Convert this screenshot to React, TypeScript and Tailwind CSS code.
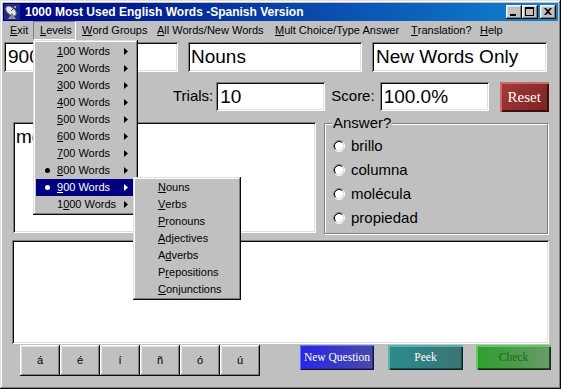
import React from 'react';

const raised =
  'shadow-[inset_-1px_-1px_#0a0a0a,inset_1px_1px_#ffffff,inset_-2px_-2px_#808080,inset_2px_2px_#dfdfdf]';
const menuFrame =
  'shadow-[inset_-1px_-1px_#0a0a0a,inset_1px_1px_#dfdfdf,inset_-2px_-2px_#808080,inset_2px_2px_#ffffff]';
const sunken =
  'shadow-[inset_1px_1px_#808080,inset_-1px_-1px_#ffffff,inset_2px_2px_#0a0a0a,inset_-2px_-2px_#dfdfdf]';

// letter with mnemonic underline
function U({ children }: { children: React.ReactNode }) {
  return <span className="underline underline-offset-[1px]">{children}</span>;
}

function Arrow({ white }: { white?: boolean }) {
  return (
    <svg width="4" height="7" viewBox="0 0 4 7" className="block">
      <polygon points="0,0 4,3.5 0,7" fill={white ? '#ffffff' : '#000000'} />
    </svg>
  );
}

function Radio() {
  return (
    <svg width="12" height="12" viewBox="0 0 12 12" className="block shrink-0">
      <circle cx="6" cy="6" r="4.5" fill="#ffffff" />
      <path d="M 2.11 9.89 A 5.5 5.5 0 0 1 9.89 2.11" stroke="#808080" fill="none" />
      <path d="M 9.89 2.11 A 5.5 5.5 0 0 1 2.11 9.89" stroke="#ffffff" fill="none" />
      <path d="M 2.82 9.18 A 4.5 4.5 0 0 1 9.18 2.82" stroke="#0a0a0a" fill="none" />
      <path d="M 9.18 2.82 A 4.5 4.5 0 0 1 2.82 9.18" stroke="#dfdfdf" fill="none" />
    </svg>
  );
}

function DishIcon() {
  return (
    <svg width="16" height="16" viewBox="0 0 16 16" className="block">
      <rect x="0" y="0" width="16" height="16" fill="#1a2a8a" />
      <ellipse cx="7" cy="7" rx="6" ry="3.5" transform="rotate(40 7 7)" fill="#e8e8e8" stroke="#808080" />
      <line x1="7" y1="7" x2="11" y2="3" stroke="#404040" strokeWidth="1" />
      <circle cx="11" cy="3" r="1" fill="#c0c0c0" />
      <path d="M 8 10 L 12 15 L 4 15 Z" fill="#a0a0a0" />
      <line x1="8" y1="9" x2="8" y2="15" stroke="#606060" />
    </svg>
  );
}

function WinButton({ kind }: { kind: 'min' | 'max' | 'close' }) {
  return (
    <div className={`relative w-[16px] h-[14px] bg-[#c0c0c0] ${raised} flex items-center justify-center`}>
      {kind === 'min' && <div className="absolute left-[4px] top-[9px] w-[6px] h-[2px] bg-black" />}
      {kind === 'max' && (
        <div className="absolute left-[3px] top-[2px] w-[9px] h-[9px] border border-black border-t-2" />
      )}
      {kind === 'close' && (
        <svg width="8" height="7" viewBox="0 0 8 7" className="block -mt-[1px]">
          <path d="M0 0 L2 0 L4 2 L6 0 L8 0 L5 3.5 L8 7 L6 7 L4 5 L2 7 L0 7 L3 3.5 Z" fill="#000" />
        </svg>
      )}
    </div>
  );
}

const levels = ['100', '200', '300', '400', '500', '600', '700', '800', '900', '1000'];
const groups: [string, string, string][] = [
  ['', 'N', 'ouns'],
  ['', 'V', 'erbs'],
  ['', 'P', 'ronouns'],
  ['', 'A', 'djectives'],
  ['A', 'd', 'verbs'],
  ['P', 'r', 'epositions'],
  ['', 'C', 'onjunctions'],
];
const answers = ['brillo', 'columna', 'molécula', 'propiedad'];
const accents = ['á', 'é', 'í', 'ñ', 'ó', 'ú'];

export default function App() {
  return (
    <div
      className={`relative w-[561px] h-[389px] bg-[#c0c0c0] p-[3px] font-['Liberation_Sans',Arial,sans-serif] text-black overflow-hidden ${menuFrame}`}
    >
      {/* Title bar */}
      <div className="h-[18px] flex items-center px-[1px] bg-[linear-gradient(90deg,#000080,#1084d0)]">
        <DishIcon />
        <span className="ml-[5px] text-[12px] font-bold text-white leading-none">
          1000 Most Used English Words -Spanish Version
        </span>
        <div className="ml-auto flex items-center mr-[1px]">
          <WinButton kind="min" />
          <WinButton kind="max" />
          <div className="w-[2px]" />
          <WinButton kind="close" />
        </div>
      </div>

      {/* Menu bar */}
      <div className="h-[19px] flex items-stretch text-[11px] leading-none">
        <div className="w-[30px] pl-[7px] flex items-center"><U>E</U>xit</div>
        <div className="w-[43px] pl-[6px] flex items-center border border-t-[#808080] border-l-[#808080] border-b-white border-r-white">
          <U>L</U>evels
        </div>
        <div className="w-[75px] pl-[6px] flex items-center"><U>W</U>ord Groups</div>
        <div className="w-[118px] pl-[6px] flex items-center whitespace-nowrap"><U>A</U>ll Words/New Words</div>
        <div className="w-[135px] pl-[6px] flex items-center whitespace-nowrap"><U>M</U>ult Choice/Type Answer</div>
        <div className="w-[70px] pl-[7px] flex items-center"><U>T</U>ranslation?</div>
        <div className="w-[36px] pl-[6px] flex items-center"><U>H</U>elp</div>
      </div>

      {/* Row 1 */}
      <div className="mt-[2px] flex h-[30px] text-[19px] leading-[20px]">
        <div className={`ml-[1px] w-[174px] bg-white ${sunken} flex items-center pl-[4px] whitespace-nowrap overflow-hidden`}>900 Words</div>
        <div className={`ml-[10px] w-[174px] bg-white ${sunken} flex items-center pl-[3px]`}>Nouns</div>
        <div className={`ml-[10px] w-[175px] bg-white ${sunken} flex items-center pl-[4px]`}>New Words Only</div>
      </div>

      {/* Row 2 */}
      <div className="mt-[10px] flex items-start h-[30px]">
        <div className="ml-[170px] h-[29px] flex items-center text-[15px]">Trials:</div>
        <div className={`ml-[3px] w-[109px] h-[29px] bg-white ${sunken} flex items-center pl-[4px] text-[19px] leading-[20px]`}>10</div>
        <div className="ml-[6px] h-[29px] flex items-center text-[15px]">Score:</div>
        <div className={`ml-[5px] w-[109px] h-[29px] bg-white ${sunken} flex items-center pl-[4px] text-[19px] leading-[20px]`}>100.0%</div>
        <button
          className="ml-[11px] w-[49px] h-[30px] flex items-center justify-center bg-[linear-gradient(135deg,#a83a3a,#7a2222)] shadow-[inset_2px_2px_0_#c86a6a,inset_-2px_-2px_0_#3a1010] text-white font-['Liberation_Serif',serif] text-[15px]"
        >
          Reset
        </button>
      </div>

      {/* Row 3 */}
      <div className="mt-[10px] flex items-start">
        <div className={`ml-[10px] w-[303px] h-[111px] bg-white ${sunken} pl-[3px] pt-[5px] text-[19px] leading-[20px] whitespace-nowrap overflow-hidden`}>
          molecule
        </div>
        <div className="relative ml-[8px] mt-[1px] w-[224px] h-[111px] border border-[#808080] shadow-[inset_1px_1px_0_#ffffff,1px_1px_0_#ffffff]">
          <span className="absolute left-[7px] -top-[10px] px-[1px] bg-[#c0c0c0] text-[15px] leading-[17px]">Answer?</span>
          <div className="flex flex-col pt-[10px] pl-[8px] text-[15px]">
            {answers.map((a) => (
              <div key={a} className="h-[24px] flex items-center">
                <Radio />
                <span className="ml-[6px]">{a}</span>
              </div>
            ))}
          </div>
        </div>
      </div>

      {/* Row 4 */}
      <div className={`mt-[6px] ml-[9px] w-[537px] h-[104px] bg-white ${sunken}`} />

      {/* Row 5 */}
      <div className="mt-[1px] flex items-start">
        <div className="ml-[17px] flex">
          {accents.map((c) => (
            <button key={c} className={`w-[40px] h-[31px] bg-[#c0c0c0] ${raised} text-[11px] flex items-center justify-center`}>
              {c}
            </button>
          ))}
        </div>
        <button className="ml-[40px] w-[74px] h-[25px] flex items-center justify-center bg-[linear-gradient(90deg,#2626e6,#4a4aa8)] shadow-[inset_1px_1px_0_#6a6aff,inset_-1px_-1px_0_#101050,inset_-2px_-2px_0_#303080] text-white font-['Liberation_Serif',serif] text-[11.5px]">
          New Question
        </button>
        <button className="ml-[14px] w-[75px] h-[25px] flex items-center justify-center bg-[linear-gradient(90deg,#2a8c8c,#3a7474)] shadow-[inset_2px_2px_0_#5ab0b0,inset_-1px_-1px_0_#0a2a2a,inset_-2px_-2px_0_#1a4a4a] text-white font-['Liberation_Serif',serif] text-[11.5px]">
          Peek
        </button>
        <button className="ml-[13px] w-[75px] h-[25px] flex items-center justify-center bg-[linear-gradient(90deg,#2e9e2e,#6a9a6a)] shadow-[inset_2px_2px_0_#60c860,inset_-1px_-1px_0_#102a10,inset_-2px_-2px_0_#2a4a2a] text-[#1a6a1a] font-['Liberation_Serif',serif] text-[11.5px]">
          Check
        </button>
      </div>

      {/* Levels dropdown */}
      <div className={`absolute left-[33px] top-[40px] w-[105px] h-[175px] bg-[#c0c0c0] ${menuFrame} pt-[3px] px-[2px] text-[11px] leading-none`}>
        {levels.map((l, i) => {
          const active = l === '900';
          const checked = l === '800' || l === '900';
          const label =
            l === '1000' ? (
              <>1<U>0</U>00 Words</>
            ) : (
              <><U>{l[0]}</U>{l.slice(1)} Words</>
            );
          return (
            <div
              key={l}
              className={`h-[17px] flex items-center ml-[1px] ${active ? 'bg-[#000080] text-white' : ''}`}
            >
              <div className="w-[21px] flex justify-center pl-[1px]">
                {checked && <div className={`w-[5px] h-[5px] rounded-full ${active ? 'bg-white' : 'bg-black'}`} />}
              </div>
              <div className="flex-1 whitespace-nowrap">{label}</div>
              <div className="mr-[8px]">
                <Arrow white={active} />
              </div>
              {i < 0 && null}
            </div>
          );
        })}
      </div>

      {/* Word group submenu */}
      <div className={`absolute left-[133px] top-[177px] w-[108px] h-[123px] bg-[#c0c0c0] ${menuFrame} pt-[2px] text-[11px] leading-none`}>
        {groups.map(([pre, u, post]) => (
          <div key={pre + u + post} className="h-[17px] flex items-center pl-[25px] whitespace-nowrap">
            {pre}
            <U>{u}</U>
            {post}
          </div>
        ))}
      </div>
    </div>
  );
}
